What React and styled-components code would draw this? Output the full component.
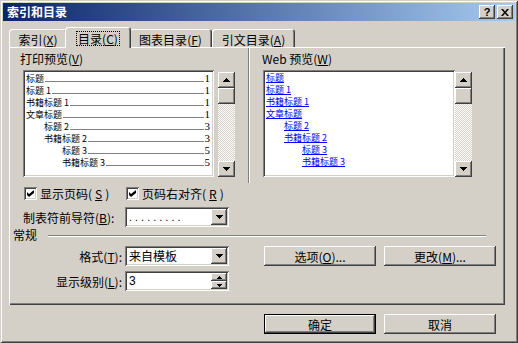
import React from "react";
import styled, { createGlobalStyle, css } from "styled-components";

const FACE = "#d4d0c8";

const GlobalStyle = createGlobalStyle`
  html, body { margin: 0; padding: 0; background: ${FACE}; }
  body {
    font-family: "Noto Sans CJK SC", "Liberation Sans", sans-serif;
    font-size: 12px;
    color: #000;
  }
  u { text-underline-offset: 1px; }
`;

const raised = css`
  box-shadow: inset -1px -1px #404040, inset 1px 1px #fff,
    inset -2px -2px #808080, inset 2px 2px ${FACE};
`;

const sunken = css`
  box-shadow: inset 1px 1px #808080, inset -1px -1px #fff,
    inset 2px 2px #404040, inset -2px -2px ${FACE};
`;

const Window = styled.div`
  width: 518px;
  height: 343px;
  box-sizing: border-box;
  padding: 3px;
  background: ${FACE};
  box-shadow: inset 1px 1px ${FACE}, inset -1px -1px #404040,
    inset 2px 2px #fff, inset -2px -2px #808080;
  display: flex;
  flex-direction: column;
`;

const TitleBar = styled.div`
  height: 18px;
  background: linear-gradient(to right, #0a246a, #a6caf0);
  display: flex;
  align-items: center;
  padding: 0 2px 0 4px;
`;

const Title = styled.div`
  flex: 1;
  color: #fff;
  font-weight: bold;
  font-size: 12px;
  line-height: 14px;
`;

const CaptionButton = styled.div`
  width: 16px;
  height: 14px;
  margin-left: ${(p) => p.$gap || 0}px;
  background: ${FACE};
  ${raised}
  display: flex;
  align-items: center;
  justify-content: center;
  font-family: "Liberation Sans", sans-serif;
  font-weight: bold;
  font-size: 11px;
  line-height: 12px;
`;

const Tabs = styled.div`
  height: 26px;
  padding-left: 6px;
  display: flex;
  align-items: flex-end;
`;

const Tab = styled.div`
  position: relative;
  z-index: ${(p) => (p.$active ? 1 : 0)};
  box-sizing: border-box;
  width: ${(p) => p.$w}px;
  height: ${(p) => (p.$active ? 21 : 18)}px;
  margin: 0 ${(p) => (p.$active ? -2 : 0)}px ${(p) => (p.$active ? -1 : 0)}px;
  background: ${FACE};
  border-radius: 3px 3px 0 0;
  box-shadow: inset 1px 1px #fff, inset -1px 0 #404040, inset -2px 0 #808080;
  display: flex;
  justify-content: center;
  align-items: center;
  padding-top: ${(p) => (p.$active ? 1 : 2)}px;
  line-height: 13px;
`;

const TabText = styled.span`
  padding: 0 1px;
  outline: ${(p) => (p.$focus ? "1px dotted #000" : "none")};
  outline-offset: 0;
`;

const Panel = styled.div`
  margin-left: 6px;
  width: 496px;
  height: 258px;
  box-sizing: border-box;
  background: ${FACE};
  box-shadow: inset 1px 1px #fff, inset -1px -1px #404040, inset -2px -2px #808080;
  display: flex;
  flex-direction: column;
`;

const PreviewRow = styled.div`
  height: 136px;
  display: flex;
`;

const Pane = styled.div`
  width: ${(p) => p.$w}px;
  padding: 6px 0 0 ${(p) => p.$pad}px;
  box-sizing: border-box;
`;

const PaneLabel = styled.div`
  height: 12px;
  line-height: 12px;
  margin-left: ${(p) => p.$shift}px;
  font-size: 12px;
`;

const ListRow = styled.div`
  margin-top: 5px;
  display: flex;
  align-items: flex-start;
`;

const ListBox = styled.div`
  width: ${(p) => p.$w}px;
  height: 107px;
  box-sizing: border-box;
  padding: 2px 4px 2px 2px;
  background: #fff;
  ${sunken}
`;

const PrintItem = styled.div`
  height: 12px;
  padding-left: ${(p) => 1 + p.$lv * 18}px;
  display: flex;
  align-items: flex-end;
  font-size: 9px;
  line-height: 11px;
`;

const Leader = styled.span`
  flex: 1;
  margin: 0 1px 2px;
  border-bottom: 1px solid #808080;
`;

const PageNum = styled.span`
  font-family: "Liberation Serif", serif;
  font-size: 11px;
  line-height: 11px;
`;

const WebItem = styled.div`
  height: 12px;
  padding-left: ${(p) => 1 + p.$lv * 18}px;
  font-size: 9px;
  line-height: 12px;
  color: #0000ff;
  text-decoration: underline;
`;

const Scroll = styled.div`
  width: 17px;
  height: 105px;
  margin: 2px 0 0 ${(p) => p.$gap}px;
  display: flex;
  flex-direction: column;
`;

const ScrollButton = styled.div`
  height: ${(p) => p.$h || 16}px;
  background: ${FACE};
  ${raised}
  display: flex;
  align-items: center;
  justify-content: center;
`;

const Track = styled.div`
  flex: 1;
  background: repeating-conic-gradient(#fff 0 25%, ${FACE} 0 50%) 0 0 / 2px 2px;
`;

const Divider = styled.div`
  width: 0;
  margin-top: 1px;
  border-left: 1px solid #808080;
  border-right: 1px solid #fff;
`;

const CheckRow = styled.div`
  margin-top: 2px;
  height: 17px;
  padding-left: 15px;
  display: flex;
  align-items: center;
`;

const CheckItem = styled.label`
  width: ${(p) => p.$w}px;
  display: flex;
  align-items: center;
  gap: 3px;
  line-height: 13px;
`;

const CheckBox = styled.span`
  width: 13px;
  height: 13px;
  box-sizing: border-box;
  background: #fff;
  ${sunken}
  display: flex;
  align-items: center;
  justify-content: center;
`;

const FieldRow = styled.div`
  margin-top: ${(p) => p.$top}px;
  height: 20px;
  display: flex;
  align-items: center;
`;

const FieldLabel = styled.div`
  width: ${(p) => p.$w}px;
  margin-left: ${(p) => p.$left || 0}px;
  margin-right: 3px;
  text-align: ${(p) => p.$align || "left"};
  line-height: 13px;
  white-space: nowrap;
`;

const Field = styled.div`
  width: 104px;
  height: 20px;
  box-sizing: border-box;
  padding: 2px;
  background: #fff;
  ${sunken}
  display: flex;
  align-items: center;
`;

const FieldValue = styled.div`
  flex: 1;
  padding-left: 2px;
  font-size: ${(p) => p.$size || 12}px;
  font-family: ${(p) =>
    p.$latin ? '"Liberation Sans", sans-serif' : '"Noto Sans CJK SC", sans-serif'};
  line-height: 14px;
  letter-spacing: ${(p) => p.$spacing || 0}px;
`;

const DropButton = styled.div`
  width: 16px;
  height: 16px;
  background: ${FACE};
  ${raised}
  display: flex;
  align-items: center;
  justify-content: center;
`;

const SpinColumn = styled.div`
  width: 16px;
  height: 16px;
  display: flex;
  flex-direction: column;
`;

const SpinHalf = styled.div`
  flex: 1;
  background: ${FACE};
  ${raised}
  display: flex;
  align-items: center;
  justify-content: center;
`;

const GroupRow = styled.div`
  margin-top: 2px;
  height: 12px;
  display: flex;
  align-items: center;
  padding-left: 4px;
  padding-right: 19px;
`;

const GroupLabel = styled.div`
  line-height: 12px;
`;

const Rule = styled.div`
  flex: 1;
  margin-left: 11px;
  margin-top: 2px;
  border-top: 1px solid #808080;
  border-bottom: 1px solid #fff;
`;

const SideButtons = styled.div`
  margin-left: 35px;
  display: flex;
  gap: 8px;
`;

const Button = styled.div`
  width: 112px;
  height: 20px;
  box-sizing: border-box;
  background: ${FACE};
  ${(p) =>
    p.$default
      ? css`
          box-shadow: inset 0 0 0 1px #000, inset -2px -2px #404040,
            inset 2px 2px #fff, inset -3px -3px #808080;
        `
      : raised}
  display: flex;
  align-items: center;
  justify-content: center;
  line-height: 13px;
  white-space: pre;
`;

const Footer = styled.div`
  margin-top: 9px;
  padding-right: 19px;
  display: flex;
  justify-content: flex-end;
  gap: 8px;
`;

const UpArrow = () => (
  <svg width="7" height="4" viewBox="0 0 7 4">
    <path d="M3 0h1v1h1v1h1v1h1v1H0V3h1V2h1V1h1z" fill="#000" />
  </svg>
);

const DownArrow = () => (
  <svg width="7" height="4" viewBox="0 0 7 4">
    <path d="M0 0h7v1H6v1H5v1H4v1H3V3H2V2H1V1H0z" fill="#000" />
  </svg>
);

const SmallUp = () => (
  <svg width="5" height="3" viewBox="0 0 5 3">
    <path d="M2 0h1v1h1v1h1v1H0V2h1V1h1z" fill="#000" />
  </svg>
);

const SmallDown = () => (
  <svg width="5" height="3" viewBox="0 0 5 3">
    <path d="M0 0h5v1H4v1H3v1H2V2H1V1H0z" fill="#000" />
  </svg>
);

const Check = () => (
  <svg width="7" height="7" viewBox="0 0 7 7">
    <path d="M0 2l2 2 5-4v3L2 7 0 5z" fill="#000" />
  </svg>
);

const CloseGlyph = () => (
  <svg width="8" height="7" viewBox="0 0 8 7">
    <path d="M0 0h2l2 2.4L6 0h2L5 3.5 8 7H6L4 4.6 2 7H0l3-3.5z" fill="#000" />
  </svg>
);

const headings = [
  { t: "标题", lv: 0, p: 1 },
  { t: "标题 1", lv: 0, p: 1 },
  { t: "书籍标题 1", lv: 0, p: 1 },
  { t: "文章标题", lv: 0, p: 1 },
  { t: "标题 2", lv: 1, p: 3 },
  { t: "书籍标题 2", lv: 1, p: 3 },
  { t: "标题 3", lv: 2, p: 5 },
  { t: "书籍标题 3", lv: 2, p: 5 },
];

const ScrollBar = ({ gap }) => (
  <Scroll $gap={gap}>
    <ScrollButton>
      <UpArrow />
    </ScrollButton>
    <ScrollButton />
    <Track />
    <ScrollButton>
      <DownArrow />
    </ScrollButton>
  </Scroll>
);

const M = ({ k }) => (
  <>
    (<u>{k}</u>)
  </>
);

export default function App() {
  return (
    <>
      <GlobalStyle />
      <Window>
        <TitleBar>
          <Title>索引和目录</Title>
          <CaptionButton>?</CaptionButton>
          <CaptionButton $gap={2}>
            <CloseGlyph />
          </CaptionButton>
        </TitleBar>

        <Tabs>
          <Tab $w={58}>
            <TabText>
              索引<M k="X" />
            </TabText>
          </Tab>
          <Tab $w={66} $active>
            <TabText $focus>
              目录<M k="C" />
            </TabText>
          </Tab>
          <Tab $w={83}>
            <TabText>
              图表目录<M k="F" />
            </TabText>
          </Tab>
          <Tab $w={83}>
            <TabText>
              引文目录<M k="A" />
            </TabText>
          </Tab>
        </Tabs>

        <Panel>
          <PreviewRow>
            <Pane $w={239} $pad={14}>
              <PaneLabel $shift={-3}>
                打印预览<M k="V" />
              </PaneLabel>
              <ListRow>
                <ListBox $w={191}>
                  {headings.map((h) => (
                    <PrintItem key={h.t} $lv={h.lv}>
                      <span>{h.t}</span>
                      <Leader />
                      <PageNum>{h.p}</PageNum>
                    </PrintItem>
                  ))}
                </ListBox>
                <ScrollBar gap={4} />
              </ListRow>
            </Pane>
            <Divider />
            <Pane $w={255} $pad={13}>
              <PaneLabel $shift={-1}>
                Web 预览<M k="W" />
              </PaneLabel>
              <ListRow>
                <ListBox $w={192}>
                  {headings.map((h) => (
                    <WebItem key={h.t} $lv={h.lv}>
                      {h.t}
                    </WebItem>
                  ))}
                </ListBox>
                <ScrollBar gap={0} />
              </ListRow>
            </Pane>
          </PreviewRow>

          <CheckRow>
            <CheckItem $w={102}>
              <CheckBox>
                <Check />
              </CheckBox>
              显示页码<M k="S" />
            </CheckItem>
            <CheckItem $w={120}>
              <CheckBox>
                <Check />
              </CheckBox>
              页码右对齐<M k="R" />
            </CheckItem>
          </CheckRow>

          <FieldRow $top={5}>
            <FieldLabel $w={99} $left={14}>
              制表符前导符<M k="B" />:
            </FieldLabel>
            <Field>
              <FieldValue $latin $size={11} $spacing={3}>
                .........
              </FieldValue>
              <DropButton>
                <DownArrow />
              </DropButton>
            </Field>
          </FieldRow>

          <GroupRow>
            <GroupLabel>常规</GroupLabel>
            <Rule />
          </GroupRow>

          <FieldRow $top={5}>
            <FieldLabel $w={113} $align="right">
              格式<M k="T" />:
            </FieldLabel>
            <Field>
              <FieldValue>来自模板</FieldValue>
              <DropButton>
                <DownArrow />
              </DropButton>
            </Field>
            <SideButtons>
              <Button>
                选项<M k="O" />...
              </Button>
              <Button>
                更改<M k="M" />...
              </Button>
            </SideButtons>
          </FieldRow>

          <FieldRow $top={5}>
            <FieldLabel $w={113} $align="right">
              显示级别<M k="L" />:
            </FieldLabel>
            <Field>
              <FieldValue $latin>3</FieldValue>
              <SpinColumn>
                <SpinHalf>
                  <SmallUp />
                </SpinHalf>
                <SpinHalf>
                  <SmallDown />
                </SpinHalf>
              </SpinColumn>
            </Field>
          </FieldRow>
        </Panel>

        <Footer>
          <Button $default>确定</Button>
          <Button>取消</Button>
        </Footer>
      </Window>
    </>
  );
}
